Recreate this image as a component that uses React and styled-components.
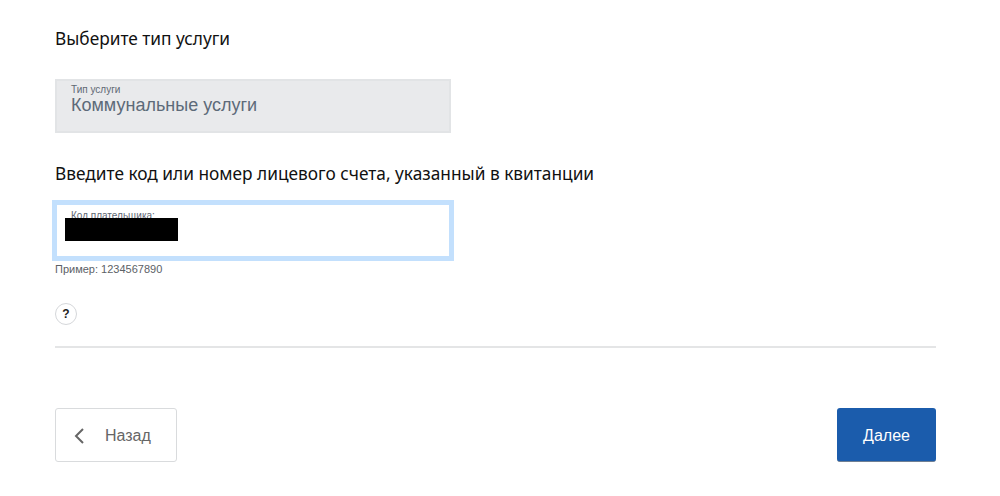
import styled, { createGlobalStyle } from "styled-components"

const GlobalStyle = createGlobalStyle`
    html, body {
        margin: 0;
        padding: 0;
        background: #fff;
    }
    body {
        font-family: "Liberation Sans", Arial, sans-serif;
    }
`

const Page = styled.div`
    display: flex;
    flex-direction: column;
    width: 936px;
    height: 496px;
    padding: 29px 0 0 55px;
    box-sizing: border-box;
`

const Title = styled.h2`
    margin: ${p => p.$top || 0}px 0 0;
    font-family: "Noto Sans", sans-serif;
    font-size: 17.3px;
    line-height: 20px;
    font-weight: 400;
    color: #111;
`

const Field = styled.div`
    display: flex;
    flex-direction: column;
    box-sizing: border-box;
    width: 396px;
    height: 54px;
    margin-top: 30px;
    padding: 3px 14px 0;
    background: #e9eaec;
    border: 2px solid #e2e4e6;
`

const ActiveField = styled.div`
    position: relative;
    display: flex;
    flex-direction: column;
    box-sizing: border-box;
    width: 402px;
    height: 61px;
    margin: 16px 0 0 -3px;
    padding: 5px 14px 0;
    background: #fff;
    border: 5px solid #c3e0fd;
`

const FieldLabel = styled.span`
    font-size: 10px;
    line-height: 11px;
    color: #5f6873;
`

const FieldValue = styled.span`
    font-size: 18px;
    line-height: 20px;
    color: #5d6a79;
`

const Redacted = styled.div`
    position: absolute;
    left: 8px;
    top: 13px;
    width: 113px;
    height: 23px;
    background: #000;
`

const Hint = styled.div`
    margin-top: 2px;
    font-size: 11px;
    line-height: 13px;
    color: #5c6166;
`

const HelpButton = styled.button`
    display: flex;
    align-items: center;
    justify-content: center;
    width: 22px;
    height: 22px;
    margin-top: 27px;
    padding: 0;
    border: 1px solid #d5d7da;
    border-radius: 50%;
    background: #fff;
    font-family: "Liberation Sans", sans-serif;
    font-size: 12px;
    font-weight: 700;
    color: #222;
`

const Divider = styled.hr`
    width: 100%;
    height: 2px;
    margin: 21px 0 0;
    border: 0;
    background: #e4e5e6;
`

const Actions = styled.div`
    display: flex;
    justify-content: space-between;
    margin-top: 60px;
`

const BackButton = styled.button`
    display: flex;
    align-items: center;
    gap: 21px;
    box-sizing: border-box;
    width: 122px;
    height: 54px;
    padding: 2px 0 0 18px;
    background: #fff;
    border: 1px solid #d9dbdd;
    border-radius: 3px;
    font-family: "Liberation Sans", sans-serif;
    font-size: 16px;
    color: #666;
`

const NextButton = styled.button`
    width: 99px;
    height: 54px;
    padding: 3px 0 0;
    background: #1b5cac;
    border: 0;
    border-bottom: 1px solid #6f7f93;
    border-radius: 3px;
    font-family: "Liberation Sans", sans-serif;
    font-size: 16px;
    color: #fff;
`

export default function App() {
    return (
        <>
            <GlobalStyle />
            <Page>
                <Title>Выберите тип услуги</Title>
                <Field>
                    <FieldLabel>Тип услуги</FieldLabel>
                    <FieldValue>Коммунальные услуги</FieldValue>
                </Field>
                <Title $top={31}>Введите код или номер лицевого счета, указанный в квитанции</Title>
                <ActiveField>
                    <FieldLabel>Код плательщика:</FieldLabel>
                    <Redacted />
                </ActiveField>
                <Hint>Пример: 1234567890</Hint>
                <HelpButton>?</HelpButton>
                <Divider />
                <Actions>
                    <BackButton>
                        <svg width="10" height="16" viewBox="0 0 10 16" fill="none">
                            <path d="M9 1 2 8l7 7" stroke="#666" strokeWidth="2" />
                        </svg>
                        Назад
                    </BackButton>
                    <NextButton>Далее</NextButton>
                </Actions>
            </Page>
        </>
    )
}
